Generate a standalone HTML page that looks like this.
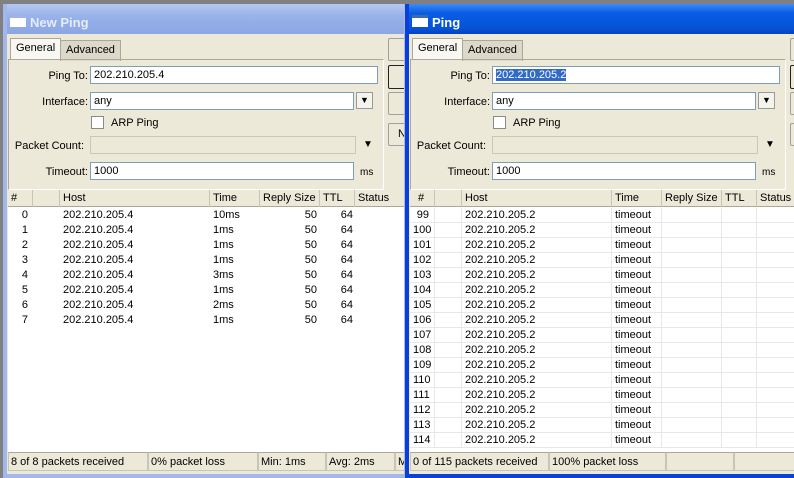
<!DOCTYPE html>
<html><head><meta charset="utf-8"><style>
*{box-sizing:border-box;margin:0;padding:0}
body{width:794px;height:478px;overflow:hidden;background:#808080;font-family:"Liberation Sans",sans-serif;font-size:11px;color:#000;position:relative}
.win{position:absolute;top:4px;height:474px;overflow:hidden;background:#ece9d8}
.ab{position:absolute}
.title{position:absolute;left:0;top:0;right:0;height:30px;color:#fff;font-weight:bold;font-size:13px;padding-top:7px;line-height:23px;padding-left:27px}
.ticon{position:absolute;left:7px;top:11px;width:16px;height:12px;background:#fff;border-top:3px solid #3a6ea5}
.tab{position:absolute;height:21px;line-height:19px;padding:0 5px;border:1px solid #aca899;border-bottom:none}
.panel{position:absolute;border:1px solid #aca899;border-right-color:#fff;border-bottom-color:#fff}
.lbl{position:absolute;text-align:right;width:80px}
.inp{position:absolute;background:#fff;border:1px solid #7f9db9;padding-left:3px;line-height:16px;height:18px}
.dis{background:#ece9d8;border-color:#c9c7ba}
.btn{position:absolute;border:1px solid #a0a0a0;background:#ece9d8;border-radius:2px}
.dd{position:absolute;width:17px;height:17px;border:1px solid #999;background:#f4f3ee;text-align:center;font-size:9px;line-height:15px}
.chk{position:absolute;width:13px;height:13px;border:1px solid #8a8a8a;background:#fff}
.tbl{position:absolute;background:#fff}
.hdr{position:absolute;height:17px;background:#ece9d8;border-bottom:1px solid #aca899}
.hdr div{position:absolute;top:0;height:17px;line-height:17px;padding-left:3px;border-right:1px solid #c8c5b6}
.row{position:absolute;height:15px;line-height:15px}
.row div{position:absolute;top:0;height:15px}
.grid .row{border-bottom:1px solid #e8e8e8}
.grid .row div{border-right:1px solid #e8e8e8;height:15px}
.r{text-align:right}
.sb{position:absolute;height:19px;line-height:19px;padding-left:2px;border:1px solid #c8c5b6;border-top-color:#aca899}
</style></head><body>

<!-- LEFT WINDOW -->
<div class="win" style="left:3px;width:405px;border:4px solid #a2b8ea;border-top:none;">
 <div class="title" style="left:-4px;right:-4px;background:linear-gradient(#b5c8f2,#98b2ea 40%,#8ba6e2);color:#e6ecfa">New Ping<div class="ticon" style="border-top-color:#9fb4e4"></div></div>
 <div class="tab" style="left:3px;top:34px;background:#f8f7f2;border-color:#aca899;height:22px">General</div>
 <div class="tab" style="left:53px;top:36px;background:#dcd9ca">Advanced</div>
 <div class="panel" style="left:1px;top:55px;width:376px;height:131px"></div>
 <div class="lbl" style="left:1px;top:66px">Ping To:</div>
 <div class="inp" style="left:83px;top:62px;width:288px">202.210.205.4</div>
 <div class="lbl" style="left:1px;top:92px">Interface:</div>
 <div class="inp" style="left:83px;top:88px;width:264px">any</div>
 <div class="dd" style="left:349px;top:88px">&#9660;</div>
 <div class="chk" style="left:84px;top:112px"></div>
 <div class="ab" style="left:104px;top:113px">ARP Ping</div>
 <div class="lbl" style="left:-3px;top:136px">Packet Count:</div>
 <div class="inp dis" style="left:83px;top:132px;width:266px"></div>
 <div class="ab" style="left:356px;top:135px;font-size:10px">&#9660;</div>
 <div class="lbl" style="left:1px;top:162px">Timeout:</div>
 <div class="inp" style="left:83px;top:158px;width:264px">1000</div>
 <div class="ab" style="left:353px;top:163px;font-size:10px">ms</div>
 <div class="btn" style="left:381px;top:34px;width:40px;height:23px"></div>
 <div class="btn" style="left:381px;top:61px;width:40px;height:24px;border-color:#222"></div>
 <div class="btn" style="left:381px;top:88px;width:40px;height:23px"></div>
 <div class="btn" style="left:381px;top:119px;width:40px;height:23px;padding:4px 0 0 9px">N</div>
 <div class="tbl" style="left:1px;top:186px;width:400px;height:262px">
  <div class="hdr" style="left:0;top:0;width:400px">
   <div style="left:0;width:25px">#</div><div style="left:25px;width:27px"></div><div style="left:52px;width:150px">Host</div><div style="left:202px;width:50px">Time</div><div style="left:252px;width:60px">Reply Size</div><div style="left:312px;width:35px">TTL</div><div style="left:347px;width:60px">Status</div>
  </div>
  <div class="row" style="top:18px"><div class="r" style="left:0;width:20px">0</div><div style="left:55px">202.210.205.4</div><div style="left:205px">10ms</div><div class="r" style="left:252px;width:57px">50</div><div class="r" style="left:312px;width:33px">64</div></div>
  <div class="row" style="top:33px"><div class="r" style="left:0;width:20px">1</div><div style="left:55px">202.210.205.4</div><div style="left:205px">1ms</div><div class="r" style="left:252px;width:57px">50</div><div class="r" style="left:312px;width:33px">64</div></div>
  <div class="row" style="top:48px"><div class="r" style="left:0;width:20px">2</div><div style="left:55px">202.210.205.4</div><div style="left:205px">1ms</div><div class="r" style="left:252px;width:57px">50</div><div class="r" style="left:312px;width:33px">64</div></div>
  <div class="row" style="top:63px"><div class="r" style="left:0;width:20px">3</div><div style="left:55px">202.210.205.4</div><div style="left:205px">1ms</div><div class="r" style="left:252px;width:57px">50</div><div class="r" style="left:312px;width:33px">64</div></div>
  <div class="row" style="top:78px"><div class="r" style="left:0;width:20px">4</div><div style="left:55px">202.210.205.4</div><div style="left:205px">3ms</div><div class="r" style="left:252px;width:57px">50</div><div class="r" style="left:312px;width:33px">64</div></div>
  <div class="row" style="top:93px"><div class="r" style="left:0;width:20px">5</div><div style="left:55px">202.210.205.4</div><div style="left:205px">1ms</div><div class="r" style="left:252px;width:57px">50</div><div class="r" style="left:312px;width:33px">64</div></div>
  <div class="row" style="top:108px"><div class="r" style="left:0;width:20px">6</div><div style="left:55px">202.210.205.4</div><div style="left:205px">2ms</div><div class="r" style="left:252px;width:57px">50</div><div class="r" style="left:312px;width:33px">64</div></div>
  <div class="row" style="top:123px"><div class="r" style="left:0;width:20px">7</div><div style="left:55px">202.210.205.4</div><div style="left:205px">1ms</div><div class="r" style="left:252px;width:57px">50</div><div class="r" style="left:312px;width:33px">64</div></div>
 </div>
 <div class="sb" style="left:1px;top:448px;width:140px">8 of 8 packets received</div>
 <div class="sb" style="left:141px;top:448px;width:110px">0% packet loss</div>
 <div class="sb" style="left:251px;top:448px;width:68px">Min: 1ms</div>
 <div class="sb" style="left:319px;top:448px;width:69px">Avg: 2ms</div>
 <div class="sb" style="left:388px;top:448px;width:40px">M</div>
</div>

<!-- RIGHT WINDOW -->
<div class="win" style="left:405px;width:400px;border:4px solid #0a3fd8;border-top:none;">
 <div class="title" style="left:-4px;right:-4px;background:linear-gradient(#3d8af7,#0a5de6 30%,#0453d8 80%,#0641c0)">Ping<div class="ticon"></div></div>
 <div class="tab" style="left:3px;top:34px;background:#f8f7f2;height:22px">General</div>
 <div class="tab" style="left:53px;top:36px;background:#dcd9ca">Advanced</div>
 <div class="panel" style="left:1px;top:55px;width:376px;height:131px"></div>
 <div class="lbl" style="left:1px;top:66px">Ping To:</div>
 <div class="inp" style="left:83px;top:62px;width:288px"><span style="background:#316ac5;color:#fff">202.210.205.2</span></div>
 <div class="lbl" style="left:1px;top:92px">Interface:</div>
 <div class="inp" style="left:83px;top:88px;width:264px">any</div>
 <div class="dd" style="left:349px;top:88px">&#9660;</div>
 <div class="chk" style="left:84px;top:112px"></div>
 <div class="ab" style="left:104px;top:113px">ARP Ping</div>
 <div class="lbl" style="left:-3px;top:136px">Packet Count:</div>
 <div class="inp dis" style="left:83px;top:132px;width:266px"></div>
 <div class="ab" style="left:356px;top:135px;font-size:10px">&#9660;</div>
 <div class="lbl" style="left:1px;top:162px">Timeout:</div>
 <div class="inp" style="left:83px;top:158px;width:264px">1000</div>
 <div class="ab" style="left:353px;top:163px;font-size:10px">ms</div>
 <div class="btn" style="left:381px;top:34px;width:40px;height:23px"></div>
 <div class="btn" style="left:381px;top:61px;width:40px;height:24px;border-color:#222"></div>
 <div class="btn" style="left:381px;top:88px;width:40px;height:23px"></div>
 <div class="btn" style="left:381px;top:119px;width:40px;height:23px"></div>
 <div class="tbl grid" style="left:1px;top:186px;width:400px;height:262px">
  <div class="hdr" style="left:0;top:0;width:400px">
   <div style="left:0;width:25px;padding-left:8px">#</div><div style="left:25px;width:27px"></div><div style="left:52px;width:150px">Host</div><div style="left:202px;width:50px">Time</div><div style="left:252px;width:60px">Reply Size</div><div style="left:312px;width:35px">TTL</div><div style="left:347px;width:60px">Status</div>
  </div>
  <div class="row" style="top:18px;width:400px"><div class="r" style="left:0;width:25px;padding-right:5px">99</div><div style="left:25px;width:27px"></div><div style="left:52px;width:150px;padding-left:3px">202.210.205.2</div><div style="left:202px;width:50px;padding-left:3px">timeout</div><div style="left:252px;width:60px"></div><div style="left:312px;width:35px"></div></div>
  <div class="row" style="top:33px;width:400px"><div style="left:0;width:25px;padding-left:3px">100</div><div style="left:25px;width:27px"></div><div style="left:52px;width:150px;padding-left:3px">202.210.205.2</div><div style="left:202px;width:50px;padding-left:3px">timeout</div><div style="left:252px;width:60px"></div><div style="left:312px;width:35px"></div></div>
  <div class="row" style="top:48px;width:400px"><div style="left:0;width:25px;padding-left:3px">101</div><div style="left:25px;width:27px"></div><div style="left:52px;width:150px;padding-left:3px">202.210.205.2</div><div style="left:202px;width:50px;padding-left:3px">timeout</div><div style="left:252px;width:60px"></div><div style="left:312px;width:35px"></div></div>
  <div class="row" style="top:63px;width:400px"><div style="left:0;width:25px;padding-left:3px">102</div><div style="left:25px;width:27px"></div><div style="left:52px;width:150px;padding-left:3px">202.210.205.2</div><div style="left:202px;width:50px;padding-left:3px">timeout</div><div style="left:252px;width:60px"></div><div style="left:312px;width:35px"></div></div>
  <div class="row" style="top:78px;width:400px"><div style="left:0;width:25px;padding-left:3px">103</div><div style="left:25px;width:27px"></div><div style="left:52px;width:150px;padding-left:3px">202.210.205.2</div><div style="left:202px;width:50px;padding-left:3px">timeout</div><div style="left:252px;width:60px"></div><div style="left:312px;width:35px"></div></div>
  <div class="row" style="top:93px;width:400px"><div style="left:0;width:25px;padding-left:3px">104</div><div style="left:25px;width:27px"></div><div style="left:52px;width:150px;padding-left:3px">202.210.205.2</div><div style="left:202px;width:50px;padding-left:3px">timeout</div><div style="left:252px;width:60px"></div><div style="left:312px;width:35px"></div></div>
  <div class="row" style="top:108px;width:400px"><div style="left:0;width:25px;padding-left:3px">105</div><div style="left:25px;width:27px"></div><div style="left:52px;width:150px;padding-left:3px">202.210.205.2</div><div style="left:202px;width:50px;padding-left:3px">timeout</div><div style="left:252px;width:60px"></div><div style="left:312px;width:35px"></div></div>
  <div class="row" style="top:123px;width:400px"><div style="left:0;width:25px;padding-left:3px">106</div><div style="left:25px;width:27px"></div><div style="left:52px;width:150px;padding-left:3px">202.210.205.2</div><div style="left:202px;width:50px;padding-left:3px">timeout</div><div style="left:252px;width:60px"></div><div style="left:312px;width:35px"></div></div>
  <div class="row" style="top:138px;width:400px"><div style="left:0;width:25px;padding-left:3px">107</div><div style="left:25px;width:27px"></div><div style="left:52px;width:150px;padding-left:3px">202.210.205.2</div><div style="left:202px;width:50px;padding-left:3px">timeout</div><div style="left:252px;width:60px"></div><div style="left:312px;width:35px"></div></div>
  <div class="row" style="top:153px;width:400px"><div style="left:0;width:25px;padding-left:3px">108</div><div style="left:25px;width:27px"></div><div style="left:52px;width:150px;padding-left:3px">202.210.205.2</div><div style="left:202px;width:50px;padding-left:3px">timeout</div><div style="left:252px;width:60px"></div><div style="left:312px;width:35px"></div></div>
  <div class="row" style="top:168px;width:400px"><div style="left:0;width:25px;padding-left:3px">109</div><div style="left:25px;width:27px"></div><div style="left:52px;width:150px;padding-left:3px">202.210.205.2</div><div style="left:202px;width:50px;padding-left:3px">timeout</div><div style="left:252px;width:60px"></div><div style="left:312px;width:35px"></div></div>
  <div class="row" style="top:183px;width:400px"><div style="left:0;width:25px;padding-left:3px">110</div><div style="left:25px;width:27px"></div><div style="left:52px;width:150px;padding-left:3px">202.210.205.2</div><div style="left:202px;width:50px;padding-left:3px">timeout</div><div style="left:252px;width:60px"></div><div style="left:312px;width:35px"></div></div>
  <div class="row" style="top:198px;width:400px"><div style="left:0;width:25px;padding-left:3px">111</div><div style="left:25px;width:27px"></div><div style="left:52px;width:150px;padding-left:3px">202.210.205.2</div><div style="left:202px;width:50px;padding-left:3px">timeout</div><div style="left:252px;width:60px"></div><div style="left:312px;width:35px"></div></div>
  <div class="row" style="top:213px;width:400px"><div style="left:0;width:25px;padding-left:3px">112</div><div style="left:25px;width:27px"></div><div style="left:52px;width:150px;padding-left:3px">202.210.205.2</div><div style="left:202px;width:50px;padding-left:3px">timeout</div><div style="left:252px;width:60px"></div><div style="left:312px;width:35px"></div></div>
  <div class="row" style="top:228px;width:400px"><div style="left:0;width:25px;padding-left:3px">113</div><div style="left:25px;width:27px"></div><div style="left:52px;width:150px;padding-left:3px">202.210.205.2</div><div style="left:202px;width:50px;padding-left:3px">timeout</div><div style="left:252px;width:60px"></div><div style="left:312px;width:35px"></div></div>
  <div class="row" style="top:243px;width:400px"><div style="left:0;width:25px;padding-left:3px">114</div><div style="left:25px;width:27px"></div><div style="left:52px;width:150px;padding-left:3px">202.210.205.2</div><div style="left:202px;width:50px;padding-left:3px">timeout</div><div style="left:252px;width:60px"></div><div style="left:312px;width:35px"></div></div>
 </div>
 <div class="sb" style="left:1px;top:448px;width:139px">0 of 115 packets received</div>
 <div class="sb" style="left:140px;top:448px;width:117px">100% packet loss</div>
 <div class="sb" style="left:257px;top:448px;width:68px"></div>
 <div class="sb" style="left:325px;top:448px;width:70px"></div>
</div>
</body></html>
